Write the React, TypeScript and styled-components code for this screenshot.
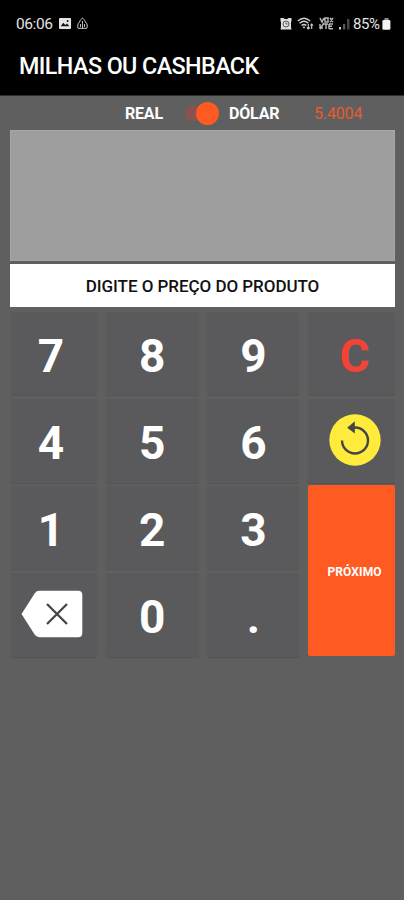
import React from "react";
import styled, { createGlobalStyle } from "styled-components";

const GlobalStyle = createGlobalStyle`
  * { box-sizing: border-box; }
  body { margin: 0; background: #5f5f5f; font-family: Roboto, sans-serif; }
  button { font-family: inherit; border: 0; }
`;

const Screen = styled.main`
  width: 404px;
  height: 900px;
  overflow: hidden;
  background: #5f5f5f;
  display: flex;
  flex-direction: column;
`;

const Header = styled.header`
  height: 96px;
  flex: none;
  background: #000;
  color: #fff;
  border-bottom: 1px solid #303030;
`;

const StatusBar = styled.div`
  height: 44px;
  padding: 3px 13px 0 16px;
  display: flex;
  align-items: center;
  justify-content: space-between;
  color: #e4e4e4;
`;

const StatusGroup = styled.div<{ $gap: number }>`
  display: flex;
  align-items: center;
  gap: ${(p) => p.$gap}px;
  svg { display: block; }
`;

const Clock = styled.span`
  font-size: 15.5px;
  letter-spacing: -0.4px;
  line-height: 18px;
  width: 37px;
  white-space: nowrap;
`;

const BatteryLevel = styled.span`
  font-size: 15px;
  line-height: 18px;
  letter-spacing: -0.4px;
  width: 28px;
  white-space: nowrap;
`;

const Title = styled.h1`
  margin: 0;
  padding: 8px 0 0 19px;
  font-size: 23.3px;
  line-height: 28px;
  font-weight: 500;
  letter-spacing: -0.57px;
  white-space: nowrap;
`;

const CurrencyRow = styled.div`
  height: 34px;
  flex: none;
  padding: 1px 0 0 125px;
  display: flex;
  align-items: center;
`;

const CurrencyLabel = styled.span<{ $width: number }>`
  width: ${(p) => p.$width}px;
  font-size: 16px;
  font-weight: 700;
  letter-spacing: -0.2px;
  color: #fff;
  white-space: nowrap;
`;

const Toggle = styled.button`
  width: 35px;
  height: 24px;
  margin: 0 9px 0 22px;
  padding: 0;
  background: none;
  display: flex;
  align-items: center;
`;

const Track = styled.span`
  width: 18px;
  height: 15px;
  flex: none;
  border-radius: 7px;
  background: #8a5350;
`;

const Thumb = styled.span`
  width: 23px;
  height: 23px;
  flex: none;
  margin-left: -7px;
  border-radius: 50%;
  background: #ff5a22;
`;

const Rate = styled.span`
  font-size: 16px;
  letter-spacing: -0.15px;
  color: #e95a32;
`;

const Display = styled.div`
  height: 131px;
  flex: none;
  margin: 0 9px 0 10px;
  background: #9e9e9e;
  border: 1px solid #a6a6a6;
`;

const Prompt = styled.div`
  height: 43px;
  flex: none;
  margin: 3px 9px 0 10px;
  background: #fff;
  color: #111;
  display: flex;
  align-items: center;
  justify-content: center;
  font-size: 17px;
  font-weight: 500;
  letter-spacing: -0.05px;
`;

const Keypad = styled.section`
  flex: none;
  margin: 5px 9px 0 11px;
  display: grid;
  grid-template-columns: 86px 93px 92px 87px;
  grid-template-rows: 83px 84px 83px 84px;
  column-gap: 8.7px;
  row-gap: 3.7px;
`;

const Key = styled.button<{ $shift?: number; $color?: string; $lift?: number }>`
  background: #5a5a5c;
  border-radius: 2px;
  padding: ${(p) => 4 - (p.$lift ?? 0)}px ${(p) => Math.max(0, -(p.$shift ?? 0))}px
    ${(p) => p.$lift ?? 0}px ${(p) => Math.max(0, p.$shift ?? 0)}px;
  box-shadow: 0 1px 1px #555557;
  color: ${(p) => p.$color ?? "#fff"};
  font-size: 46px;
  line-height: 54px;
  font-weight: 700;
  display: flex;
  align-items: center;
  justify-content: center;
  svg { flex: none; }
`;

const NextKey = styled(Key)`
  grid-column: 4;
  grid-row: 3 / 5;
  margin: -1px 0 1px;
  background: #ff5a22;
  box-shadow: none;
  font-size: 12px;
  line-height: 14px;
  letter-spacing: 0.1px;
`;

const ImageIcon = () => (
  <svg width="12" height="11" viewBox="0 0 12 11">
    <rect width="12" height="11" rx="1" fill="#e4e4e4" />
    <path d="M1.7 8.3 4.3 4.8 6.3 7 8 5.4 10.3 8.3Z" fill="#111" />
    <circle cx="8.6" cy="3" r="1" fill="#111" />
  </svg>
);

const DropIcon = () => (
  <svg width="11" height="13" viewBox="0 0 11 13" fill="none" stroke="#d0d0d0">
    <path d="M5.5 1C5.5 1 3 3 2.6 5 .6 6.6.3 9 1.2 11.3H9.8C10.7 9 10.4 6.6 8.4 5 8 3 5.5 1 5.5 1Z" />
    <path d="M5.5 4V11M3.5 7V10M7.5 7V10" strokeWidth=".9" />
  </svg>
);

const AlarmIcon = () => (
  <svg width="12" height="12" viewBox="0 0 12 12">
    <path d="M.5 0H3.5L4.5 1H7.5L8.5 0H11.5V3L11 4V9L11.5 11.5H.5L1 9V4L.5 3Z" fill="#e0e0e0" />
    <circle cx="6" cy="6" r="3" fill="none" stroke="#333" strokeWidth=".8" />
    <path d="M6 4.5V6H7.5" fill="none" stroke="#333" strokeWidth=".8" />
  </svg>
);

const WifiIcon = () => (
  <svg width="17" height="13" viewBox="0 0 17 13" fill="none" stroke="#cfcfcf" strokeWidth="1.4">
    <path d="M.8 4Q7 -1.5 13.2 4M2.6 6.3Q7 2.4 11.4 6.3M4.6 8.6Q7 6.3 9.4 8.6" />
    <path d="M6 9.7 7 10.8 8 9.7M11.3 7V12M9.9 10.5 11.3 12 12.7 10.5M14.7 12V7M13.4 8.5 14.7 7 16 8.5" strokeWidth="1.1" />
  </svg>
);

const VolteIcon = () => (
  <svg width="15" height="13" viewBox="0 0 15 13" fill="none" stroke="#b5b5b5" strokeWidth="1.5">
    <path d="M1 1 3 5 5 1M6 1H9V5H6ZM11 1 14 5M14 1 11 5M1 7V11H4M5 7H9M7 7V12M10 7H14M10 9.3H13M10 11.7H14M10 7V12M1 12 5 6" />
  </svg>
);

const SignalIcon = () => (
  <svg width="11" height="12" viewBox="0 0 11 12">
    <rect x="0" y="9" width="2" height="2.5" fill="#ccc" />
    <rect x="4" y="6" width="2.3" height="5.5" fill="#555" />
    <rect x="8" y="1" width="2.5" height="10.5" fill="#444" />
  </svg>
);

const BatteryIcon = () => (
  <svg width="9" height="12" viewBox="0 0 9 12">
    <rect x="2.5" y="0" width="4" height="3" fill="#8b8b8b" />
    <rect x=".4" y="2" width="8" height="9.7" rx="1.3" fill="#f3f3f3" />
  </svg>
);

const ResetIcon = () => (
  <svg width="52" height="52" viewBox="0 0 52 52">
    <circle cx="26" cy="26" r="25.7" fill="#ffeb3b" />
    <path d="M13 26.5A13 13 0 1 0 26 13.5H22" fill="none" stroke="#454545" strokeWidth="2.4" />
    <path d="M18.2 13.7 25.8 7.2V19.5Z" fill="#454545" />
  </svg>
);

const BackspaceIcon = () => (
  <svg width="62" height="48" viewBox="0 0 62 48">
    <path d="M18.5.8H57Q61.3.8 61.3 5V43Q61.3 47.2 57 47.2H18.5Q15.5 47.2 13.8 44.8L.5 24 13.8 3.2Q15.5.8 18.5.8Z" fill="#fff" />
    <path d="M26 14 46 34M46 14 26 34" stroke="#454545" strokeWidth="2.3" />
  </svg>
);

export default function App() {
  return (
    <Screen>
      <GlobalStyle />
      <Header>
        <StatusBar>
          <StatusGroup $gap={6}>
            <Clock>06:06</Clock>
            <ImageIcon />
            <DropIcon />
          </StatusGroup>
          <StatusGroup $gap={5}>
            <AlarmIcon />
            <WifiIcon />
            <VolteIcon />
            <StatusGroup $gap={3}>
              <SignalIcon />
              <StatusGroup $gap={1}>
                <BatteryLevel>85%</BatteryLevel>
                <BatteryIcon />
              </StatusGroup>
            </StatusGroup>
          </StatusGroup>
        </StatusBar>
        <Title>MILHAS OU CASHBACK</Title>
      </Header>
      <CurrencyRow>
        <CurrencyLabel $width={38}>REAL</CurrencyLabel>
        <Toggle aria-label="Moeda" role="switch" aria-checked="true">
          <Track />
          <Thumb />
        </Toggle>
        <CurrencyLabel $width={85}>DÓLAR</CurrencyLabel>
        <Rate>5.4004</Rate>
      </CurrencyRow>
      <Display />
      <Prompt>DIGITE O PREÇO DO PRODUTO</Prompt>
      <Keypad>
        <Key $shift={-6}>7</Key>
        <Key>8</Key>
        <Key>9</Key>
        <Key $shift={6} $color="#f44336">C</Key>
        <Key $shift={-6}>4</Key>
        <Key>5</Key>
        <Key>6</Key>
        <Key $shift={6} $lift={3} aria-label="Reiniciar"><ResetIcon /></Key>
        <Key $shift={-6}>1</Key>
        <Key>2</Key>
        <Key>3</Key>
        <NextKey $shift={6} $lift={1}>PRÓXIMO</NextKey>
        <Key $shift={-5} $lift={3} aria-label="Apagar"><BackspaceIcon /></Key>
        <Key>0</Key>
        <Key>.</Key>
      </Keypad>
    </Screen>
  );
}
